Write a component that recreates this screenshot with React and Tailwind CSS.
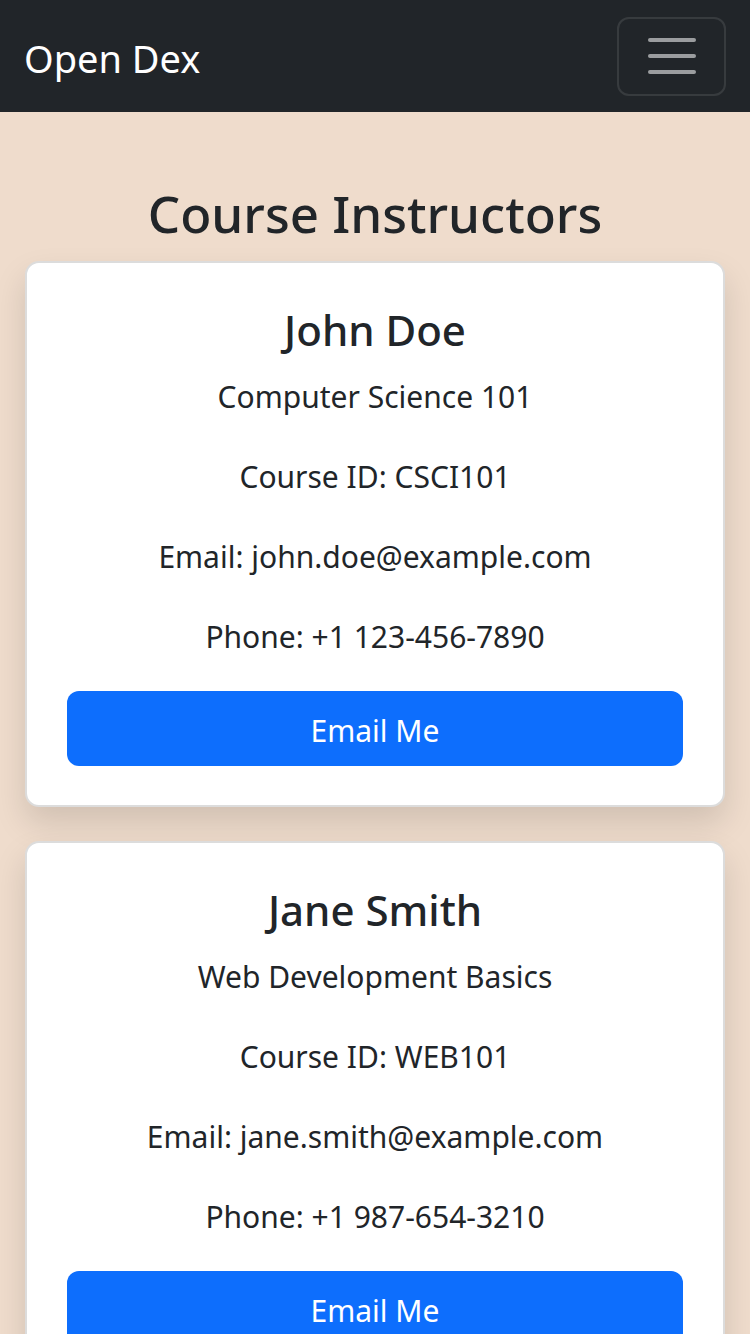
import React from "react";

const instructors = [
  {
    name: "John Doe",
    course: "Computer Science 101",
    id: "CSCI101",
    email: "john.doe@example.com",
    phone: "+1 123-456-7890",
  },
  {
    name: "Jane Smith",
    course: "Web Development Basics",
    id: "WEB101",
    email: "jane.smith@example.com",
    phone: "+1 987-654-3210",
  },
];

const InstructorCard = ({ person }) => (
  <div className="bg-white border-2 border-[#dcdcdc] rounded-[14px] shadow-[0_16px_32px_rgba(0,0,0,0.13)] px-[40px] pt-[38px] pb-[39px] text-center">
    <h3 className="text-[42px] leading-[57px] font-medium text-[#212529] mb-[15px]">
      {person.name}
    </h3>
    <p className="text-[30px] leading-[48px] mb-[32px]">{person.course}</p>
    <p className="text-[30px] leading-[48px] mb-[32px]">Course ID: {person.id}</p>
    <p className="text-[30px] leading-[48px] mb-[32px]">Email: {person.email}</p>
    <p className="text-[30px] leading-[48px] mb-[30px]">Phone: {person.phone}</p>
    <button className="w-full h-[75px] pt-[5px] bg-[#0d6efd] text-white text-[30px] leading-[48px] rounded-[12px]">
      Email Me
    </button>
  </div>
);

const App = () => {
  return (
    <div className="min-h-screen bg-[#efdccc] text-[#212529] font-['Noto_Sans',sans-serif]">
      {/* Navbar */}
      <nav className="h-[112px] bg-[#212529] flex items-center justify-between pl-[24px] pr-[24px]">
        <span className="text-white text-[38px] leading-[60px] pt-[4px]">Open Dex</span>
        <button className="w-[109px] h-[79px] border-2 border-white/10 rounded-[12px] flex flex-col items-center justify-center gap-[12px]">
          <span className="block w-[48px] h-[4px] bg-white/55 rounded-full"></span>
          <span className="block w-[48px] h-[4px] bg-white/55 rounded-full"></span>
          <span className="block w-[48px] h-[4px] bg-white/55 rounded-full"></span>
        </button>
      </nav>

      {/* Content */}
      <div className="px-[25px] pt-[72px] pb-[40px]">
        <h2 className="text-center text-[51px] leading-[59px] font-medium mb-[18px]">
          Course Instructors
        </h2>
        <div className="flex flex-col gap-[34px]">
          {instructors.map((p) => (
            <InstructorCard key={p.id} person={p} />
          ))}
        </div>
      </div>
    </div>
  );
};

export default App;
